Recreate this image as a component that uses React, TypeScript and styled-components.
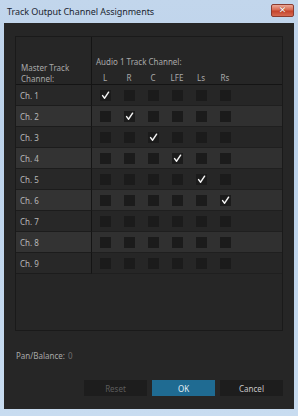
import React from "react";
import styled, { createGlobalStyle } from "styled-components";

const Global = createGlobalStyle`
  html, body { margin: 0; padding: 0; background: #c9dcef; }
  * { box-sizing: border-box; }
`;

const Window = styled.div`
  width: 298px;
  height: 416px;
  display: flex;
  flex-direction: column;
  background: linear-gradient(180deg, #c2d6ec 0%, #bcd2ea 30%, #c8dcf0 100%);
  font-family: "Noto Sans", "Liberation Sans", sans-serif;
`;

const TitleBar = styled.div`
  height: 23px;
  flex: none;
  display: flex;
  align-items: center;
  justify-content: space-between;
  padding: 0 4px 0 7px;
`;

const Title = styled.span`
  font-size: 9px;
  color: #1b2530;
  letter-spacing: -0.05px;
`;

const CloseButton = styled.div`
  width: 23px;
  height: 13px;
  margin-top: -2px;
  border-radius: 2px;
  border: 1px solid #8a3b30;
  background: linear-gradient(180deg, #eba897 0%, #d8684f 45%, #c4432c 55%, #d66a52 100%);
  display: flex;
  align-items: center;
  justify-content: center;
  color: #fff;
  font-size: 9px;
  font-weight: bold;
  line-height: 1;
  font-family: "DejaVu Sans", sans-serif;
  text-shadow: 0 0 1px #6a1e12;
`;

const Body = styled.div`
  flex: 1;
  margin: 0 4px 7px 4px;
  background: #262626;
  display: flex;
  flex-direction: column;
  padding: 13px 11px 0 11px;
  color: #b4b4b4;
  font-size: 8px;
`;

const Frame = styled.div`
  height: 295px;
  flex: none;
  border: 1px solid #1a1a1a;
  background: #262626;
  display: flex;
  flex-direction: column;
`;

const Grid = styled.div`
  display: grid;
  grid-template-columns: 76px 1fr;
`;

const LabelHeader = styled.div`
  height: 48px;
  border-right: 1px solid #141414;
  border-bottom: 1px solid #141414;
  padding: 0 0 0 5px;
  display: flex;
  flex-direction: column;
  justify-content: flex-end;
  line-height: 11px;
  color: #a9a9a9;
`;

const ChannelHeader = styled.div`
  height: 48px;
  border-bottom: 1px solid #141414;
  display: flex;
  flex-direction: column;
  justify-content: flex-end;
  padding-bottom: 1px;
  color: #a9a9a9;
`;

const HeaderTitle = styled.div`
  padding-left: 4px;
  line-height: 11px;
  margin-bottom: 5px;
`;

const Cols = styled.div`
  display: grid;
  grid-template-columns: repeat(6, 24px);
  padding-left: 1px;
  line-height: 11px;
`;

const ColLabel = styled.div`
  text-align: center;
`;

const LabelCell = styled.div<{ $alt: boolean }>`
  height: 21px;
  background: ${(p) => (p.$alt ? "#333333" : "#282828")};
  border-right: 1px solid #141414;
  border-bottom: 1px solid #1c1c1c;
  display: flex;
  align-items: center;
  padding-left: 4px;
  color: #b8b8b8;
`;

const BoxCell = styled.div<{ $alt: boolean }>`
  height: 21px;
  background: ${(p) => (p.$alt ? "#303030" : "#262626")};
  border-bottom: 1px solid #1f1f1f;
  display: grid;
  grid-template-columns: repeat(6, 24px);
  padding-left: 1px;
  align-items: center;
  justify-items: center;
`;

const Check = styled.div`
  width: 11px;
  height: 11px;
  background: #1b1b1b;
  display: flex;
  align-items: center;
  justify-content: center;
`;

const PanRow = styled.div`
  margin-top: 19px;
  padding-left: 1px;
  color: #a8a8a8;
  line-height: 11px;
`;

const PanValue = styled.span`
  color: #6e6e6e;
  margin-left: 3px;
`;

const Buttons = styled.div`
  margin-top: 19px;
  display: flex;
  justify-content: flex-end;
  gap: 5px;
`;

const Button = styled.div<{ $variant: "primary" | "default" | "disabled" }>`
  width: 63px;
  height: 16px;
  display: flex;
  align-items: center;
  justify-content: center;
  font-size: 8px;
  background: ${(p) => (p.$variant === "primary" ? "#1f6b92" : "#1d1d1d")};
  color: ${(p) =>
    p.$variant === "primary" ? "#e4eef4" : p.$variant === "disabled" ? "#5c5c5c" : "#c8c8c8"};
`;

const cols = ["L", "R", "C", "LFE", "Ls", "Rs"];

const CheckMark = () => (
  <svg width="9" height="9" viewBox="0 0 9 9">
    <path d="M1.6 4.6 L3.6 7.2 L7.6 1.2" stroke="#f2f2f2" strokeWidth="1.5" fill="none" strokeLinecap="round" strokeLinejoin="round" />
  </svg>
);

export default function App() {
  const rows = Array.from({ length: 9 }, (_, i) => i);
  return (
    <>
      <Global />
      <Window>
        <TitleBar>
          <Title>Track Output Channel Assignments</Title>
          <CloseButton>✕</CloseButton>
        </TitleBar>
        <Body>
          <Frame>
            <Grid>
              <LabelHeader>
                <div>Master Track</div>
                <div>Channel:</div>
              </LabelHeader>
              <ChannelHeader>
                <HeaderTitle>Audio 1 Track Channel:</HeaderTitle>
                <Cols>
                  {cols.map((c) => (
                    <ColLabel key={c}>{c}</ColLabel>
                  ))}
                </Cols>
              </ChannelHeader>
              {rows.map((r) => (
                <React.Fragment key={r}>
                  <LabelCell $alt={r % 2 === 1}>Ch. {r + 1}</LabelCell>
                  <BoxCell $alt={r % 2 === 1}>
                    {cols.map((c, ci) => (
                      <Check key={c}>{ci === r ? <CheckMark /> : null}</Check>
                    ))}
                  </BoxCell>
                </React.Fragment>
              ))}
            </Grid>
          </Frame>
          <PanRow>
            Pan/Balance:<PanValue>0</PanValue>
          </PanRow>
          <Buttons>
            <Button $variant="disabled">Reset</Button>
            <Button $variant="primary">OK</Button>
            <Button $variant="default">Cancel</Button>
          </Buttons>
        </Body>
      </Window>
    </>
  );
}
